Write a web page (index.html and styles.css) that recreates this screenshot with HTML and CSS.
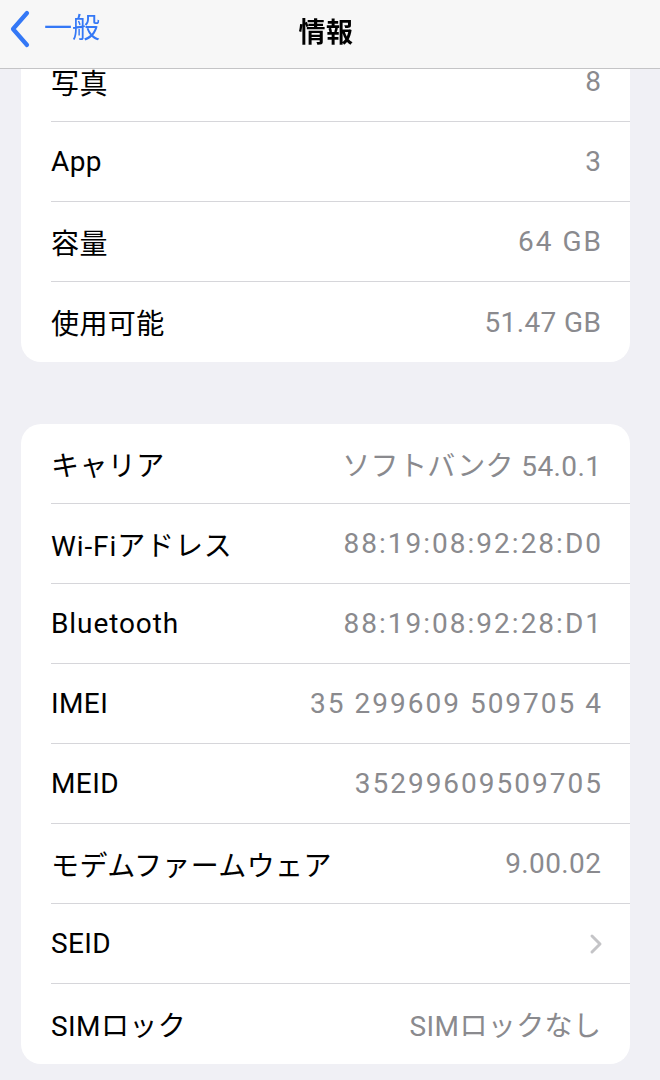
FILE: index.html
```html
<!DOCTYPE html>
<html lang="ja">
<head>
<meta charset="utf-8">
<link rel="stylesheet" href="styles.css">
</head>
<body>
<header class="navbar">
  <div class="back">
    <svg class="back-chevron" width="24" height="38" viewBox="0 0 24 38">
      <path d="M19 3 L5 19 L19 35" fill="none" stroke="#3478f6" stroke-width="4.2" stroke-linecap="round" stroke-linejoin="round"/>
    </svg>
    <span class="back-label">一般</span>
  </div>
  <div class="title">情報</div>
</header>
<main class="content">
  <section class="card">
    <div class="row"><span class="label">写真</span><span class="value">8</span></div>
    <div class="row"><span class="label">App</span><span class="value">3</span></div>
    <div class="row"><span class="label">容量</span><span class="value num">64 GB</span></div>
    <div class="row"><span class="label">使用可能</span><span class="value">51.47 GB</span></div>
  </section>
  <section class="card">
    <div class="row"><span class="label">キャリア</span><span class="value">ソフトバンク 54.0.1</span></div>
    <div class="row"><span class="label wide">Wi-Fiアドレス</span><span class="value mono">88:19:08:92:28:D0</span></div>
    <div class="row"><span class="label wide">Bluetooth</span><span class="value mono">88:19:08:92:28:D1</span></div>
    <div class="row"><span class="label">IMEI</span><span class="value mono">35 299609 509705 4</span></div>
    <div class="row"><span class="label">MEID</span><span class="value mono">35299609509705</span></div>
    <div class="row"><span class="label">モデムファームウェア</span><span class="value">9.00.02</span></div>
    <div class="row"><span class="label">SEID</span>
      <svg class="chev" width="14" height="22" viewBox="0 0 14 22"><path d="M3 3 L11 11 L3 19" fill="none" stroke="#c4c4c7" stroke-width="3" stroke-linecap="round" stroke-linejoin="round"/></svg>
    </div>
    <div class="row"><span class="label">SIMロック</span><span class="value">SIMロックなし</span></div>
  </section>
</main>
</body>
</html>
```
FILE: styles.css
```css
html, body {
  margin: 0;
  padding: 0;
}
body {
  background: #f0f0f5;
  font-family: "Roboto", "Noto Sans CJK JP", sans-serif;
  color: #000;
  width: 660px;
  height: 1080px;
  overflow: hidden;
}
.navbar {
  position: fixed;
  top: 0;
  left: 0;
  right: 0;
  height: 68px;
  background: rgba(247, 247, 247, 0.97);
  border-bottom: 1px solid #c4c4c6;
  display: flex;
  align-items: center;
  justify-content: center;
  z-index: 10;
}
.back {
  position: absolute;
  left: 8px;
  top: 10px;
  display: flex;
  align-items: center;
  gap: 12px;
}
.back-chevron {
  display: block;
}
.back-label {
  color: #3478f6;
  font-size: 28px;
  line-height: 38px;
}
.title {
  font-size: 27px;
  font-weight: 700;
  margin-top: -8px;
  margin-left: -8px;
  letter-spacing: 0.5px;
}
.content {
  padding-top: 42px;
  display: flex;
  flex-direction: column;
  gap: 62px;
}
.card {
  margin: 0 30px 0 21px;
  background: #fff;
  border-radius: 20px;
  padding-left: 30px;
}
.row {
  height: 80px;
  box-sizing: border-box;
  display: flex;
  align-items: center;
  justify-content: space-between;
  padding-right: 29px;
  border-bottom: 1px solid #d6d6da;
  font-size: 28px;
  letter-spacing: 0.4px;
}
.row:last-child {
  border-bottom: none;
}
.label {
  color: #000;
}
.label.wide {
  letter-spacing: 0.9px;
}
.value {
  color: #8a8a8e;
  margin-right: -0.4px;
}
.value.num {
  letter-spacing: 2px;
  margin-right: -2px;
}
.value.mono {
  letter-spacing: 2px;
  margin-right: -2px;
}
.chev {
  display: block;
  margin-right: -2px;
}
```
